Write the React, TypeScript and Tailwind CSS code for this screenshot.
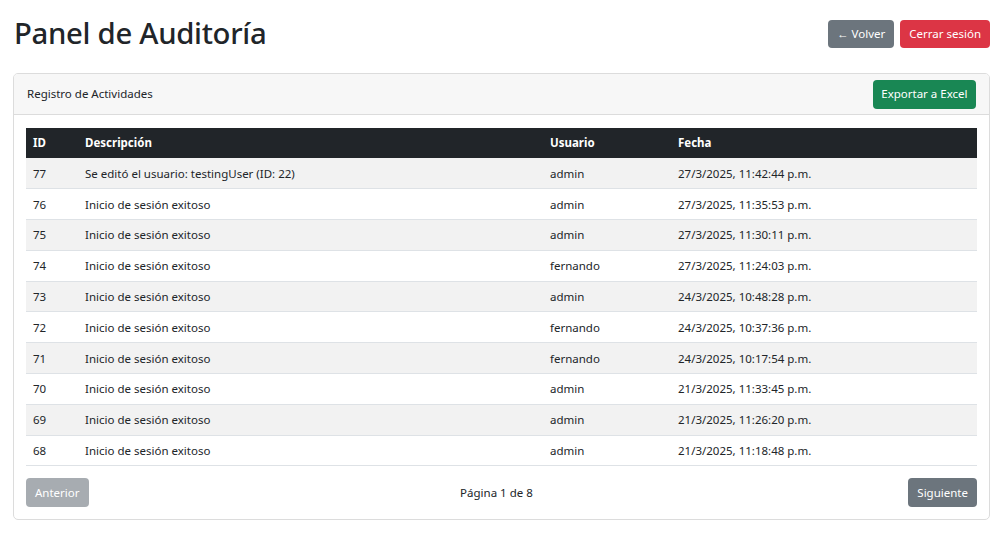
import React from 'react';

const logs = [
  { id: 77, desc: 'Se editó el usuario: testingUser (ID: 22)', user: 'admin', date: '27/3/2025, 11:42:44 p.m.' },
  { id: 76, desc: 'Inicio de sesión exitoso', user: 'admin', date: '27/3/2025, 11:35:53 p.m.' },
  { id: 75, desc: 'Inicio de sesión exitoso', user: 'admin', date: '27/3/2025, 11:30:11 p.m.' },
  { id: 74, desc: 'Inicio de sesión exitoso', user: 'fernando', date: '27/3/2025, 11:24:03 p.m.' },
  { id: 73, desc: 'Inicio de sesión exitoso', user: 'admin', date: '24/3/2025, 10:48:28 p.m.' },
  { id: 72, desc: 'Inicio de sesión exitoso', user: 'fernando', date: '24/3/2025, 10:37:36 p.m.' },
  { id: 71, desc: 'Inicio de sesión exitoso', user: 'fernando', date: '24/3/2025, 10:17:54 p.m.' },
  { id: 70, desc: 'Inicio de sesión exitoso', user: 'admin', date: '21/3/2025, 11:33:45 p.m.' },
  { id: 69, desc: 'Inicio de sesión exitoso', user: 'admin', date: '21/3/2025, 11:26:20 p.m.' },
  { id: 68, desc: 'Inicio de sesión exitoso', user: 'admin', date: '21/3/2025, 11:18:48 p.m.' },
];

export default function App() {
  return (
    <div className="min-h-screen bg-white px-[13px] pt-[14px] text-[#212529] font-['Noto_Sans',sans-serif] text-[11.5px]">
      {/* header */}
      <div className="w-[977px] flex items-center justify-between h-[40px] mb-[19px]">
        <h1 className="text-[29.3px] font-medium leading-none tracking-[-0.3px] pl-[1px]">Panel de Auditoría</h1>
        <div className="flex gap-[6px]">
          <button className="h-[28px] px-[9px] rounded-[4px] bg-[#6c757d] text-white">← Volver</button>
          <button className="h-[28px] px-[9px] rounded-[4px] bg-[#dc3545] text-white">Cerrar sesión</button>
        </div>
      </div>

      {/* card */}
      <div className="w-[977px] border border-[#dcdcdc] rounded-[5px] overflow-hidden">
        <div className="flex items-center justify-between h-[41px] px-[13px] bg-[#f7f7f7] border-b border-[#dcdcdc]">
          <span>Registro de Actividades</span>
          <button className="h-[29px] px-[8.5px] rounded-[4px] bg-[#198754] text-white">Exportar a Excel</button>
        </div>

        <div className="px-[12px] pt-[13px] pb-[12px]">
          <table className="w-full border-collapse">
            <thead>
              <tr className="bg-[#212529] text-white h-[30px]">
                <th className="text-left font-bold pl-[7px] w-[53px]">ID</th>
                <th className="text-left font-bold pl-[6px] w-[464px]">Descripción</th>
                <th className="text-left font-bold pl-[7px] w-[128px]">Usuario</th>
                <th className="text-left font-bold pl-[7px]">Fecha</th>
              </tr>
            </thead>
            <tbody>
              {logs.map((l, i) => (
                <tr key={l.id} className={`h-[30.8px] border-b border-[#dee2e6] ${i % 2 === 0 ? 'bg-[#f2f2f2]' : 'bg-white'}`}>
                  <td className="pl-[7px]">{l.id}</td>
                  <td className="pl-[6px]">{l.desc}</td>
                  <td className="pl-[7px]">{l.user}</td>
                  <td className="pl-[7px]">{l.date}</td>
                </tr>
              ))}
            </tbody>
          </table>

          <div className="flex items-center justify-between mt-[12px]">
            <button className="h-[29px] px-[9px] rounded-[4px] bg-[#a7acb1] text-white">Anterior</button>
            <span className="ml-[-4px]">Página 1 de 8</span>
            <button className="h-[29px] px-[9px] rounded-[4px] bg-[#6c757d] text-white">Siguiente</button>
          </div>
        </div>
      </div>
    </div>
  );
}
